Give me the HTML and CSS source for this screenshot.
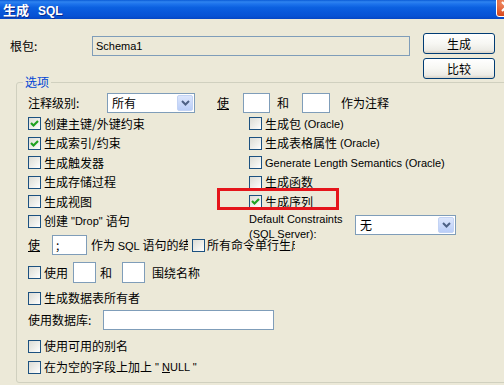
FILE: index.html
```html
<!DOCTYPE html>
<html>
<head>
<meta charset="utf-8">
<link rel="stylesheet" href="styles.css">
</head>
<body>
<div class="titlebar">
  <span class="title">生成<span class="title-en">SQL</span></span>
  <span class="close"><svg width="19" height="19" viewBox="0 0 19 19"><path d="M5 5 L14 14 M14 5 L5 14" stroke="#fff" stroke-width="2"/></svg></span>
</div>

<div class="top">
  <div class="rootrow">
    <span class="lbl-root">根包:</span>
    <div class="tb root"><span class="en">Schema1</span></div>
  </div>
  <div class="btns">
    <button class="btn">生成</button>
    <button class="btn">比较</button>
  </div>
</div>

<fieldset class="group">
  <legend>选项</legend>

  <div class="row row-a">
    <span class="lbl-level">注释级别:</span>
    <div class="sel sel-level"><span class="selv">所有</span><span class="arrow"><svg width="9" height="6" viewBox="0 0 9 6"><path d="M1 1 L4.5 4.5 L8 1" fill="none" stroke="#4D6185" stroke-width="2"/></svg></span></div>
    <span class="u ml22">使</span>
    <div class="tb w27 ml14"></div>
    <span class="ml7">和</span>
    <div class="tb w28 ml13"></div>
    <span class="ml11">作为注释</span>
  </div>

  <div class="opts">
    <label class="cbrow"><span class="cb on"><svg width="11" height="11" viewBox="0 0 11 11"><path d="M2 5 L4.5 7.5 L9 3" fill="none" stroke="#21A121" stroke-width="2.2"/></svg></span>创建主键/外键约束</label>
    <label class="cbrow"><span class="cb"></span>生成包<span class="en">(Oracle)</span></label>

    <label class="cbrow"><span class="cb on"><svg width="11" height="11" viewBox="0 0 11 11"><path d="M2 5 L4.5 7.5 L9 3" fill="none" stroke="#21A121" stroke-width="2.2"/></svg></span>生成索引/约束</label>
    <label class="cbrow"><span class="cb"></span>生成表格属性 <span class="en">(Oracle)</span></label>

    <label class="cbrow"><span class="cb"></span>生成触发器</label>
    <label class="cbrow"><span class="cb"></span><span class="en">Generate Length Semantics (Oracle)</span></label>

    <label class="cbrow"><span class="cb"></span>生成存储过程</label>
    <label class="cbrow"><span class="cb"></span>生成函数</label>

    <label class="cbrow"><span class="cb"></span>生成视图</label>
    <label class="cbrow mark"><span class="cb on"><svg width="11" height="11" viewBox="0 0 11 11"><path d="M2 5 L4.5 7.5 L9 3" fill="none" stroke="#21A121" stroke-width="2.2"/></svg></span>生成序列<span class="redbox"></span></label>

    <label class="cbrow"><span class="cb"></span>创建 <span class="en">"Drop"</span> 语句</label>
    <div class="dc">
      <span class="dclbl en">Default Constraints<br>(SQL Server):</span>
      <div class="sel sel-dc"><span class="selv">无</span><span class="arrow"><svg width="9" height="6" viewBox="0 0 9 6"><path d="M1 1 L4.5 4.5 L8 1" fill="none" stroke="#4D6185" stroke-width="2"/></svg></span></div>
    </div>
  </div>

  <div class="row row-b">
    <span class="u">使</span>
    <div class="tb w35 ml12 semi">;</div>
    <span class="clip1">作为 <span class="en">SQL</span> 语句的结束符</span>
    <span class="cb ml4"></span>
    <span class="clip2">所有命令单行生成</span>
  </div>

  <div class="row row-c">
    <span class="cb"></span>
    <span class="ml3">使用</span>
    <div class="tb w23 ml5 h21"></div>
    <span class="ml4">和</span>
    <div class="tb w23 ml10 h21"></div>
    <span class="ml7">围绕名称</span>
  </div>

  <label class="cbrow row-d"><span class="cb"></span>生成数据表所有者</label>

  <div class="row row-db">
    <span class="lbl-db">使用数据库:</span>
    <div class="tb w171"></div>
  </div>

  <label class="cbrow row-e"><span class="cb"></span>使用可用的别名</label>
  <label class="cbrow row-f"><span class="cb"></span>在为空的字段上加上<span class="en">" <u>N</u>ULL "</span></label>
</fieldset>
</body>
</html>
```

FILE: styles.css
```css
* { box-sizing: border-box; }
html, body { margin: 0; padding: 0; }
body {
  width: 504px;
  height: 385px;
  overflow: hidden;
  background: #ECE9D8;
  font-family: "Noto Sans CJK SC", "Liberation Sans", sans-serif;
  font-size: 12px;
  line-height: 14px;
  color: #000;
}
.en { font-family: "Liberation Sans", "Noto Sans CJK SC", sans-serif; font-size: 11px; }
.u { text-decoration: underline; }

/* title bar */
.titlebar {
  height: 19px;
  display: flex;
  align-items: flex-start;
  background: linear-gradient(to bottom, #0A5BD6 0%, #2F84F0 10%, #1E74EC 20%, #0B60E0 40%, #0857DA 65%, #0752D4 85%, #0546C4 100%);
}
.title {
  color: #fff;
  font-weight: bold;
  font-size: 13px;
  line-height: 15px;
  padding: 2px 0 0 3px;
  text-shadow: 1px 1px 0 #0B2A8C;
}
.title-en { font-family: "Liberation Sans", sans-serif; font-size: 12px; font-weight: bold; margin-left: 9px; }
.close {
  margin-left: auto;
  margin-right: -13px;
  margin-top: -4px;
  width: 21px;
  height: 21px;
  flex: none;
  border: 1px solid #fff;
  border-radius: 3px;
  background: radial-gradient(circle at 30% 30%, #EE8A63, #D8491E 70%, #C4380F);
  display: flex;
  align-items: center;
  justify-content: center;
}

/* top */
.top { display: flex; padding: 14px 0 0 10px; }
.rootrow { display: flex; align-items: center; height: 20px; margin-top: 3px; }
.lbl-root { width: 82px; }
.tb { height: 20px; border: 1px solid #7F9DB9; background: #fff; flex: none; }
.root { width: 318px; background: #ECE9D8; display: flex; align-items: center; padding-left: 3px; }
.btns { margin-left: 13px; display: flex; flex-direction: column; gap: 4px; }
.btn {
  width: 72px;
  height: 21px;
  padding: 0;
  border: 1px solid #003C74;
  border-radius: 3px;
  background: linear-gradient(to bottom, #FFFFFF 0%, #F7F7F3 50%, #ECEBE5 85%, #D8D2C6 100%);
  font: inherit;
  color: #000;
}

/* group */
.group {
  margin: -4px -40px 0 16px;
  padding: 0 0 5px 11px;
  border: 1px solid #D0D0BF;
  border-radius: 3px;
  min-width: 0;
}
.group legend {
  margin-left: -5px;
  padding: 0 2px;
  color: #0046D5;
  line-height: 14px;
}
.row { display: flex; align-items: center; white-space: nowrap; }
.row-a { height: 20px; margin-top: 4px; }
.lbl-level { width: 79px; }
.sel {
  height: 20px;
  border: 1px solid #7F9DB9;
  background: #fff;
  display: flex;
  align-items: center;
  padding: 1px;
  flex: none;
}
.selv { flex: 1; padding-left: 3px; }
.arrow {
  width: 16px;
  height: 16px;
  border: 1px solid #C3D3F4;
  border-radius: 2px;
  background: linear-gradient(to bottom, #DCE6FC, #BACEF8);
  display: flex;
  align-items: center;
  justify-content: center;
}
.sel-level { width: 88px; }
.sel-dc { width: 101px; margin-top: 3.5px; }
.w23 { width: 23px; }
.w27 { width: 27px; }
.w28 { width: 28px; }
.w35 { width: 35px; }
.w171 { width: 171px; }
.h21 { height: 21px; }
.ml3 { margin-left: 3px; }
.ml4 { margin-left: 4px; }
.ml5 { margin-left: 5px; }
.ml7 { margin-left: 7px; }
.ml10 { margin-left: 10px; }
.ml11 { margin-left: 11px; }
.ml12 { margin-left: 12px; }
.ml13 { margin-left: 13px; }
.ml14 { margin-left: 14px; }
.ml22 { margin-left: 22px; }

.opts {
  display: grid;
  grid-template-columns: 221px 1fr;
  grid-auto-rows: 19.5px;
  margin-top: 1px;
}
.cbrow { display: flex; align-items: center; gap: 3px; white-space: nowrap; }
.cb {
  width: 13px;
  height: 13px;
  flex: none;
  border: 1px solid #1C5180;
  background: linear-gradient(135deg, #DCDCD5 0%, #F0F0EC 60%, #FFFFFF 100%);
  display: flex;
  align-items: center;
  justify-content: center;
}
.mark { position: relative; }
.redbox {
  position: absolute;
  left: -32px;
  top: -4px;
  width: 122px;
  height: 22px;
  border: 3px solid #E5151B;
}
.dc { display: flex; align-items: flex-start; }
.dclbl { width: 106px; line-height: 15px; margin-top: 0.5px; }

.row-b { height: 20px; margin-top: 4px; }
.semi { display: flex; align-items: center; padding-left: 3px; }
.clip1 { margin-left: 4px; width: 97px; overflow: hidden; }
.clip2 { margin-left: 2px; width: 88px; overflow: hidden; }
.row-c { height: 21px; margin-top: 7px; }
.row-d { height: 20px; margin-top: 5px; }
.row-db { height: 20px; margin-top: 2px; }
.lbl-db { width: 75px; }
.row-e { height: 20px; margin-top: 6px; }
.row-f { height: 20px; margin-top: 1px; }
```
